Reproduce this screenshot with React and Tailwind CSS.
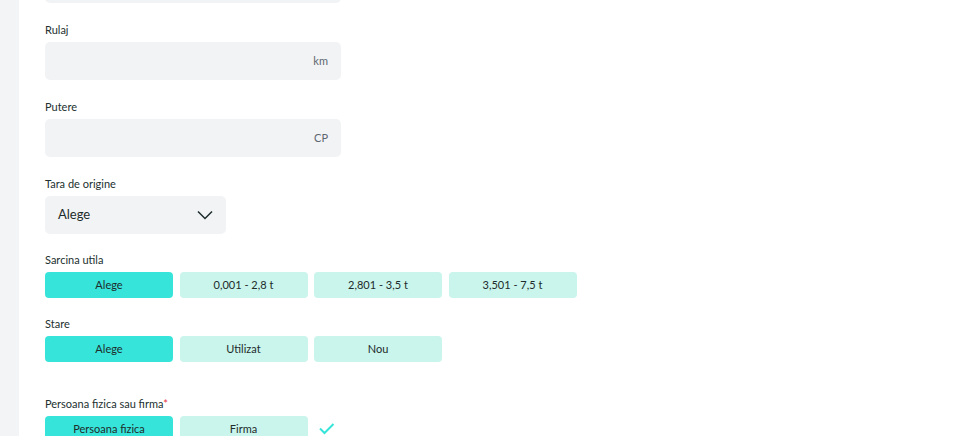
import { useState } from "react";

const sarcinaOptions = ["Alege", "0,001 - 2,8 t", "2,801 - 3,5 t", "3,501 - 7,5 t"];
const stareOptions = ["Alege", "Utilizat", "Nou"];
const persoanaOptions = ["Persoana fizica", "Firma"];

function Label({ children, required }) {
    return (
        <div className="text-[11px] leading-[14px] text-[#22302f]">
            {children}
            {required && <span className="text-[#e5343d]">*</span>}
        </div>
    );
}

function UnitInput({ unit }) {
    return (
        <div className="mt-[5px] flex h-[38px] w-[296px] items-center justify-end rounded-[5px] bg-[#f2f3f5] pr-[13px]">
            <span className="text-[11px] text-[#5d6770]">{unit}</span>
        </div>
    );
}

function Choices({ options, selected, onSelect, children }) {
    return (
        <div className="mt-[5px] flex items-center gap-[6.5px]">
            {options.map((opt, i) => (
                <button
                    key={opt}
                    type="button"
                    onClick={() => onSelect(i)}
                    className={
                        selected === i
                            ? "h-[26px] w-[128px] rounded-[4px] bg-[#37e4da] text-[11px] text-[#1d2b2b]"
                            : "h-[26px] w-[128px] rounded-[4px] bg-[#c9f5ec] text-[11px] text-[#1d2b2b]"
                    }
                >
                    {opt}
                </button>
            ))}
            {children}
        </div>
    );
}

export default function App() {
    const [sarcina, setSarcina] = useState(0);
    const [stare, setStare] = useState(0);
    const [persoana, setPersoana] = useState(0);

    return (
        <div className="flex h-[436px] w-[960px] overflow-hidden bg-white font-['Lato',sans-serif]">
            {/* Bara laterala */}
            <div className="w-[19px] shrink-0 bg-[#f3f4f6]" />

            <div className="flex flex-1 flex-col pl-[26px]">
                {/* Camp anterior, taiat sus */}
                <div className="-mt-[35px] h-[38px] w-[296px] shrink-0 rounded-[5px] bg-[#f2f3f5]" />

                <div className="mt-[20px]">
                    <Label>Rulaj</Label>
                    <UnitInput unit="km" />
                </div>

                <div className="mt-[20px]">
                    <Label>Putere</Label>
                    <UnitInput unit="CP" />
                </div>

                <div className="mt-[20px]">
                    <Label>Tara de origine</Label>
                    <div className="mt-[5px] flex h-[38px] w-[181px] items-center justify-between rounded-[5px] bg-[#f2f3f5] pl-[13px] pr-[13px]">
                        <span className="text-[13px] text-[#1d2b2b]">Alege</span>
                        <svg width="16" height="10" viewBox="0 0 16 10" fill="none">
                            <path d="M1 1.5L8 8.5L15 1.5" stroke="#1d2b2b" strokeWidth="1.5" />
                        </svg>
                    </div>
                </div>

                <div className="mt-[19px]">
                    <Label>Sarcina utila</Label>
                    <Choices options={sarcinaOptions} selected={sarcina} onSelect={setSarcina} />
                </div>

                <div className="mt-[19px]">
                    <Label>Stare</Label>
                    <Choices options={stareOptions} selected={stare} onSelect={setStare} />
                </div>

                <div className="mt-[35px]">
                    <Label required>Persoana fizica sau firma</Label>
                    <Choices options={persoanaOptions} selected={persoana} onSelect={setPersoana}>
                        <svg className="ml-[4px]" width="18" height="14" viewBox="0 0 18 14" fill="none">
                            <path d="M2 6.5L6.5 11L15.5 2" stroke="#37e4da" strokeWidth="2" />
                        </svg>
                    </Choices>
                </div>
            </div>
        </div>
    );
}
